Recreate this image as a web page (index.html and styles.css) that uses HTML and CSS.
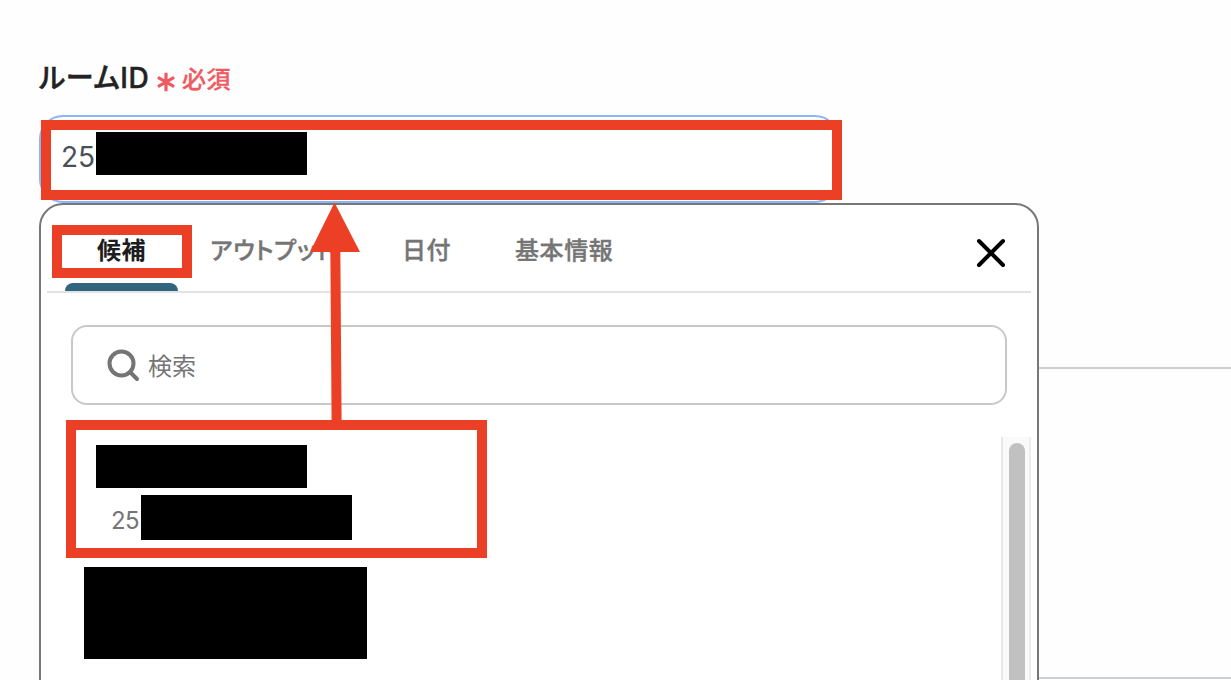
FILE: index.html
```
<!DOCTYPE html>
<html lang="ja">
<head>
  <meta charset="UTF-8">
  <meta name="viewport" content="width=device-width, initial-scale=1.0">
  <title>ルームID</title>
  <link rel="stylesheet" href="styles.css">
</head>
<body>
  <div class="page">
    <div class="field-label">
      <span class="label-text">ルームID</span>
      <svg class="asterisk" width="18" height="20" viewBox="0 0 18 20">
        <path d="M9 0.8v18.4M0.9 5.3l16.2 9.4M17.1 5.3L0.9 14.7"/>
      </svg>
      <span class="required">必須</span>
    </div>

    <div class="room-input">
      <span>25</span>
      <span class="mask mask-input"></span>
    </div>

    <div class="content">
      <!-- Suggestion panel -->
      <div class="panel">
        <div class="tabs">
          <div class="tab active">候補</div>
          <div class="tab tab-output">アウトプット</div>
          <div class="tab tab-date">日付</div>
          <div class="tab">基本情報</div>
          <svg class="close" width="32" height="32" viewBox="0 0 32 32">
            <path d="M4 4l24 24M28 4L4 28"/>
          </svg>
        </div>

        <div class="search">
          <svg width="34" height="34" viewBox="0 0 34 34">
            <circle cx="15.5" cy="15.5" r="12"/>
            <path d="M24 24l7 7"/>
          </svg>
          <span>検索</span>
        </div>

        <div class="results">
          <div class="list">
            <span class="mask mask-title"></span>
            <div class="value">
              <span>25</span>
              <span class="mask mask-value"></span>
            </div>
            <span class="mask mask-next"></span>
          </div>
          <div class="scrollbar">
            <div class="thumb"></div>
          </div>
        </div>
      </div>

      <div class="section"></div>
    </div>

    <!-- Annotations -->
    <svg class="marks" width="1231" height="680" viewBox="0 0 1231 680">
      <rect x="46" y="125" width="791" height="70"/>
      <rect x="57" y="230" width="130" height="43"/>
      <rect x="71" y="425" width="411" height="128"/>
      <path d="M335.3 245L336.6 422"/>
      <polygon points="334.5,202.5 310,252 360,252"/>
    </svg>
  </div>
</body>
</html>
```

FILE: styles.css
```
* {
  box-sizing: border-box;
}

body {
  margin: 0;
  background: #fefefe;
  font-family: Inter, 'Noto Sans CJK JP', sans-serif;
}

.page {
  position: relative;
  width: 1231px;
  height: 680px;
  padding: 58px 0 0 39px;
  overflow: hidden;
}

.field-label {
  display: flex;
  align-items: center;
  height: 40px;
  margin-bottom: 17px;
  color: #222222;
}

.label-text {
  width: 118px;
  font-size: 28px;
  font-weight: 500;
  line-height: 40px;
  letter-spacing: 0.7px;
  font-feature-settings: "palt";
  -webkit-text-stroke: 0.5px #222222;
  white-space: nowrap;
}

.asterisk {
  margin-top: 8px;
  fill: none;
  stroke: #ef5a61;
  stroke-width: 3.2;
}

.required {
  margin-left: 7px;
  padding-top: 3px;
  font-size: 24px;
  font-weight: 500;
  line-height: 40px;
  letter-spacing: 0.5px;
  -webkit-text-stroke: 0.3px #ef5a61;
  color: #ef5a61;
}

.room-input {
  display: flex;
  width: 800px;
  height: 88px;
  padding: 15px 21px 15px 20px;
  border: 2px solid #8ab6f9;
  border-radius: 24px;
  background: #ffffff;
  color: #4b5058;
  font-size: 28px;
  line-height: 50px;
}

.room-input span:first-child {
  width: 35px;
}

.mask {
  display: block;
  flex-shrink: 0;
  width: 211px;
  height: 43px;
  background: #000000;
}

.content {
  display: flex;
}

.panel {
  display: flex;
  flex-direction: column;
  width: 1000px;
  height: 500px;
  padding: 0 6px;
  border: 2px solid #777777;
  border-radius: 24px;
  background: #ffffff;
}

.tabs {
  display: flex;
  height: 88px;
  padding: 0 24px 0 18px;
  border-bottom: 2px solid #e2e2e2;
  color: #757575;
  font-family: 'Noto Sans CJK JP', sans-serif;
  font-size: 24px;
  font-weight: 500;
  line-height: 88px;
  letter-spacing: 0.6px;
  white-space: nowrap;
}

.tab {
  -webkit-text-stroke: 0.4px #757575;
}

.tab.active {
  display: flex;
  flex-direction: column;
  width: 113px;
  margin-right: 32px;
  color: #1d1d1d;
  font-weight: 700;
  -webkit-text-stroke: 0;
  text-align: center;
}

.tab.active::after {
  content: "";
  height: 8px;
  margin-top: -10px;
  border-radius: 8px 8px 0 0;
  background: #30677f;
}

.tab-output {
  width: 192px;
  font-feature-settings: "palt";
}

.tab-date {
  width: 113px;
}

.close {
  margin: 32px 0 0 auto;
  fill: none;
  stroke: #000000;
  stroke-width: 4;
  stroke-linecap: round;
}

.search {
  display: flex;
  align-items: center;
  height: 80px;
  margin: 32px 24px;
  padding-left: 33px;
  border: 2px solid #c8c8c8;
  border-radius: 16px;
  color: #757575;
  font-size: 24px;
  line-height: 34px;
}

.search svg {
  margin-right: 8px;
  fill: none;
  stroke: #757575;
  stroke-width: 4;
  stroke-linecap: round;
}

.search span {
  padding-top: 3px;
}

.results {
  display: flex;
  justify-content: space-between;
  flex: 1;
}

.list {
  padding: 8px 0 0 37px;
}

.mask-title {
  margin-left: 12px;
}

.value {
  display: flex;
  margin: 7px 0 27px 27px;
  color: #757575;
  font-size: 24px;
  line-height: 51px;
  height: 45px;
  letter-spacing: -0.6px;
}

.value span:first-child {
  width: 30px;
}

.mask-value {
  height: 45px;
}

.mask-next {
  width: 283px;
  height: 92px;
}

.scrollbar {
  width: 30px;
  padding: 6px 4px 0 6px;
  border-left: 2px solid #e8e8e8;
  border-right: 2px solid #ededed;
  background: #fafafa;
}

.thumb {
  width: 16px;
  height: 100%;
  border-radius: 8px;
  background: #c1c1c1;
}

.section {
  flex: 1;
  height: 312px;
  margin-top: 164px;
  border-top: 2px solid #cdd1d6;
  border-bottom: 2px solid #cdd1d6;
}

/* drawn over the form */
.marks {
  position: absolute;
  top: 0;
  left: 0;
  fill: none;
  stroke: #eb4026;
  stroke-width: 10;
}

.marks polygon {
  fill: #eb4026;
  stroke: none;
}
```
